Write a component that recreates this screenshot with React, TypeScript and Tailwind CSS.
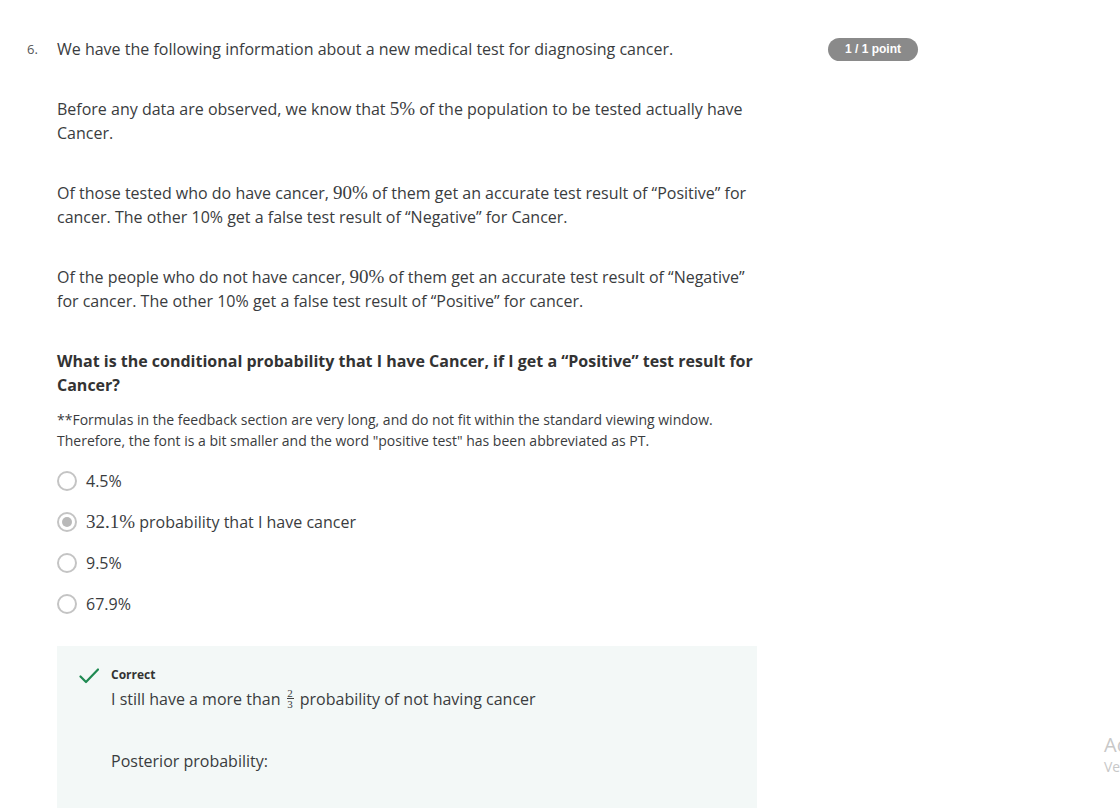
import React from "react";

const M = ({ children }: { children: React.ReactNode }) => (
  <span className="font-['Liberation_Serif','DejaVu_Serif',serif] text-[19px] leading-[20px]">{children}</span>
);

const Frac = ({ n, d }: { n: string; d: string }) => (
  <span className="inline-flex flex-col items-center align-middle mx-[2px] -mt-[4px] font-['Liberation_Serif',serif] text-[11px] leading-[10px]">
    <span>{n}</span>
    <span className="w-[7px] border-t border-[#444]" />
    <span>{d}</span>
  </span>
);

const options = [
  { id: 1, label: <>4.5%</>, selected: false },
  {
    id: 2,
    label: (
      <>
        <M>32.1%</M> probability that I have cancer
      </>
    ),
    selected: true,
  },
  { id: 3, label: <>9.5%</>, selected: false },
  { id: 4, label: <>67.9%</>, selected: false },
];

const Radio = ({ selected }: { selected: boolean }) => (
  <span className="w-[20px] h-[20px] rounded-full border-2 border-[#c4c4c4] flex items-center justify-center shrink-0 bg-white">
    {selected && <span className="w-[10px] h-[10px] rounded-full bg-[#b9b9b9]" />}
  </span>
);

export default function App() {
  return (
    <div className="relative w-full h-[808px] overflow-hidden bg-white text-[#3a3c3e] font-['Open_Sans','Noto_Sans',sans-serif]">
      <div className="flex pt-[37px]">
        <div className="w-[57px] pl-[27px] text-[13px] leading-[24px] text-[#555]">6.</div>
        <div className="w-[700px] text-[16px] leading-[24px]">
          <p className="mb-[36px]">We have the following information about a new medical test for diagnosing cancer.</p>
          <p className="mb-[36px]">
            Before any data are observed, we know that <M>5%</M> of the population to be tested actually have Cancer.
          </p>
          <p className="mb-[36px]">
            Of those tested who do have cancer, <M>90%</M> of them get an accurate test result of “Positive” for
            cancer. The other 10% get a false test result of “Negative” for Cancer.
          </p>
          <p className="mb-[36px]">
            Of the people who do not have cancer, <M>90%</M> of them get an accurate test result of “Negative”
            for cancer. The other 10% get a false test result of “Positive” for cancer.
          </p>
          <p className="font-bold text-[#333]">
            What is the conditional probability that I have Cancer, if I get a “Positive” test result for Cancer?
          </p>
          <p className="mt-[12px] text-[14px] leading-[21px]">
            **Formulas in the feedback section are very long, and do not fit within the standard viewing window.
            Therefore, the font is a bit smaller and the word "positive test" has been abbreviated as PT.
          </p>
          <div className="mt-[9px] flex flex-col">
            {options.map((o) => (
              <div key={o.id} className="h-[41px] flex items-center gap-[9px]">
                <Radio selected={o.selected} />
                <span>{o.label}</span>
              </div>
            ))}
          </div>
          <div className="mt-[22px] bg-[#f3f8f7] h-[200px] pl-[22px] pt-[21px]">
            <div className="flex items-start gap-[12px]">
              <svg width="20" height="16" viewBox="0 0 20 16" fill="none" className="mt-[1px]">
                <path d="M1.5 8.5L7 14L19 1.5" stroke="#1f8a52" strokeWidth="2.2" strokeLinecap="round" strokeLinejoin="round" />
              </svg>
              <div>
                <div className="text-[12px] leading-[16px] font-bold text-[#333]">Correct</div>
                <div className="mt-[4px] text-[16px] leading-[24px]">
                  I still have a more than <Frac n="2" d="3" /> probability of not having cancer
                </div>
                <div className="mt-[38px] text-[16px] leading-[24px]">Posterior probability:</div>
              </div>
            </div>
          </div>
        </div>
        <div className="ml-[71px] -mt-[2px]">
          <span className="inline-flex items-center justify-center w-[90px] h-[23px] rounded-full bg-[#8a8a8a] text-white text-[12px] font-bold font-['Liberation_Sans',Arial,sans-serif]">
            1 / 1 point
          </span>
        </div>
      </div>
      <div className="absolute left-[1104px] top-[732px] whitespace-nowrap text-[#c8c8c8] font-['Open_Sans',sans-serif] pointer-events-none">
        <div className="text-[20px] leading-[26px]">Activar Windows</div>
        <div className="text-[14px] leading-[18px]">Ve a Configuración para activar Windows.</div>
      </div>
    </div>
  );
}
